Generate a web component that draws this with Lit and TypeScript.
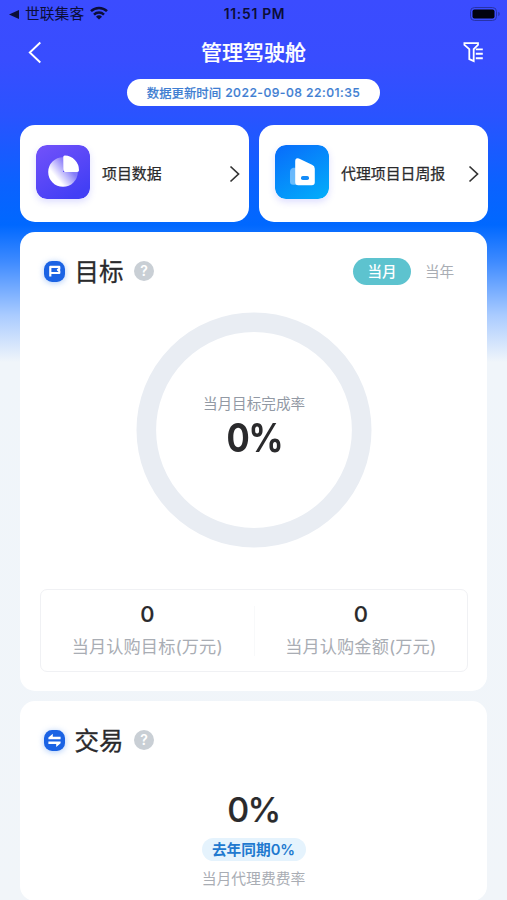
import { LitElement, html, svg, css } from "lit";
import { customElement, property, state } from "lit/decorators.js";
import { classMap } from "lit/directives/class-map.js";

const flagGlyph = svg`
  <path d="M7.6 17.2V7.2h9.4v2.2l-1.4 1 1.4 1v2.2H7.6" fill="none" stroke="#fff" stroke-width="2.3" stroke-linejoin="round"/>`;
const swapGlyph = svg`
  <path d="M10.2 4.9v3.2h8.2v2.6H5.6V8.9zM5.6 13h12.8v1.8l-4.6 4v-3.2H5.6z" fill="#fff"/>`;

@customElement("section-head")
export class SectionHead extends LitElement {
  @property() label = "";
  @property() glyph = "flag";

  static styles = css`
    :host { display: flex; align-items: center; height: 28px; font-family: "Noto Sans CJK SC", sans-serif; }
    .mark { width: 21px; height: 21px; filter: drop-shadow(0 1px 3px #2a78f066); }
    .label { font-size: 24.5px; line-height: 28px; color: #2a2a2c; margin-left: 9.5px; margin-right: .5px; -webkit-text-stroke: 0.3px #2a2a2c; }
    .help { margin-left: 10px; width: 20px; height: 20px; border-radius: 50%; background: #c9cfd5; color: #fff;
      font: 600 14px/20px Inter, sans-serif; text-align: center; }
  `;

  render() {
    return html`
      <svg class="mark" viewBox="1 1 22 22">
        <rect x="1" y="1" width="22" height="22" rx="8.5" fill="#1b63e4"/>
        ${this.glyph === "flag" ? flagGlyph : swapGlyph}
      </svg>
      <span class="label">${this.label}</span>
      <span class="help">?</span>`;
  }
}

@customElement("app-root")
export class AppRoot extends LitElement {
  @state() private period = "当月";

  private stats = [
    { value: "0", label: "当月认购目标(万元)" },
    { value: "0", label: "当月认购金额(万元)" },
  ];

  static styles = css`
    :host {
      display: block; box-sizing: border-box; height: 900px; overflow: hidden;
      font-family: Inter, "Noto Sans CJK SC", sans-serif; color: #2a2a2c;
      background: linear-gradient(180deg, #3b4cff 0, #384dff 60px, #2a53ff 115px, #0a62ff 185px, #0068ff 225px, #3f8bff 262px, #a9cbff 315px, #f0f5fa 362px, #f1f5f9 100%);
    }
    .status { display: grid; grid-template-columns: 1fr auto 1fr; align-items: center; height: 28px; padding: 0 6px 0 9px; color: #0b0e38; box-sizing: border-box; }
    .back-app { display: flex; align-items: center; font-size: 14.8px; line-height: 20px; }
    .tri { width: 10px; height: 9px; margin-right: 6px; }
    .wifi { width: 18px; height: 14px; margin-left: 6px; margin-top: -2px; }
    .clock { font-size: 13.8px; font-weight: 600; letter-spacing: 0.75px; margin-right: 1px; }
    .battery { justify-self: end; width: 31px; height: 14px; margin-top: -1px; }
    .nav { display: grid; grid-template-columns: 40px 1fr 40px; align-items: center; height: 49px; padding: 0 14px; color: #fff; }
    .nav svg { display: block; }
    .chev-left { width: 14px; height: 24px; margin-left: 14px; }
    .title { text-align: center; font-size: 21px; line-height: 28px; font-weight: 500; -webkit-text-stroke: 0.2px #fff; }
    .filter { width: 22px; height: 22px; justify-self: end; margin: -2px 9px 0 0; }
    .updated { width: 253px; height: 27px; margin: 2px auto 0; border-radius: 14px; background: #fff; color: #3f7ed2;
      display: flex; align-items: center; justify-content: center; gap: 4px; font-size: 12.4px; font-weight: 500; white-space: nowrap; -webkit-text-stroke: 0.15px; }
    .date { letter-spacing: 0.45px; font-size: 12.2px; }
    .links { display: grid; grid-template-columns: 229px 229px; gap: 10px; margin: 19px 20px 10px; }
    .link { height: 97px; box-sizing: border-box; border-radius: 15px; background: #fff; display: flex; align-items: center; padding: 0 9px 3px 16.4px; }
    .tile { width: 54px; height: 54px; border-radius: 11px; box-shadow: 0 3px 7px #5a5cff33; }
    .link-name { flex: 1; margin-left: 11.6px; padding-top: 4px; font-size: 14.9px; line-height: 20px; -webkit-text-stroke: 0.25px #2a2a2c; white-space: nowrap; }
    .chev-right { width: 11px; height: 18px; margin-top: 3px; }
    .card { margin: 0 20px 10px; background: #fff; border-radius: 15px; box-sizing: border-box; width: 467px; }
    .target { height: 459px; padding: 25px 19px 0 20px; display: flex; flex-direction: column; }
    .head { display: flex; justify-content: space-between; align-items: center; padding: 0 0 0 4px; height: 28px; }
    .toggle { display: flex; font-size: 14.6px; line-height: 28px; color: #a9adb4; }
    .opt { width: 57px; height: 27px; border-radius: 14px; text-align: center; }
    .on { width: 58px; background: #5dc3cf; color: #fff; font-weight: 500; }
    .ring { display: grid; width: 236px; height: 236px; margin: 27px auto 41px; }
    .ring > * { grid-area: 1 / 1; }
    .ring-text { display: flex; flex-direction: column; align-items: center; padding-top: 81px; }
    .caption { font-size: 14.6px; line-height: 22px; color: #9299a4; white-space: nowrap; }
    .rate { font-weight: 700; font-size: 37.5px; line-height: 44px; letter-spacing: -1.2px; margin-top: 1px; transform: scale(0.92, 1.04); }
    .stats { display: grid; grid-template-columns: 1fr 1px 1fr; height: 83px; box-sizing: border-box; border: 1px solid #f0f1f4; border-radius: 7px; align-items: center; }
    .rule { background: #f8f9fa; height: 50px; }
    .stat { display: flex; flex-direction: column; align-items: center; margin-top: -3px; }
    .num { font-size: 22px; line-height: 28px; font-weight: 500; -webkit-text-stroke: 0.2px; }
    .stat-name { font-size: 17.2px; line-height: 24px; margin-top: 7px; color: #a9adb4; letter-spacing: 0.1px; white-space: nowrap; }
    .trade { height: 200px; padding: 25px 20px 0; }
    .trade-head { padding: 0 4px; }
    .trade-body { display: flex; flex-direction: column; align-items: center; }
    .trade-rate { font-size: 34px; line-height: 40px; font-weight: 500; letter-spacing: -1.6px; margin-top: 36px; -webkit-text-stroke: 0.2px; }
    .compare { margin-top: 8px; height: 23px; width: 104px; border-radius: 12px; background: #e5f3fd; color: #2179cf;
      font-size: 14.7px; line-height: 24px; font-weight: 600; text-align: center; white-space: nowrap; }
    .pale { color: #a9adb4; margin-top: 7px; font-size: 14.8px; }
  `;

  private chevron() {
    return html`<svg class="chev-right" viewBox="0 0 11 18"><path d="M1.5 1.5 9.5 9l-8 7.5" fill="none" stroke="#333" stroke-width="1.7"/></svg>`;
  }

  render() {
    return html`
      <div class="status">
        <div class="back-app">
          <svg class="tri" viewBox="0 0 10 9"><path d="M0 4.5 10 0v9z" fill="currentColor"/></svg>
          <span>世联集客</span>
          <svg class="wifi" viewBox="0 0 18 14" fill="none" stroke="currentColor" stroke-width="2.5">
            <path d="M1 5.2a11.6 11.6 0 0 1 16 0M4 8.6a7.3 7.3 0 0 1 10 0"/>
            <path d="M9 13.6 6 10.7a4.4 4.4 0 0 1 6 0z" fill="currentColor" stroke="none"/>
          </svg>
        </div>
        <div class="clock">11:51 PM</div>
        <svg class="battery" viewBox="0 0 31 14">
          <rect x=".5" y=".5" width="26" height="13" rx="4" fill="none" stroke="#2733a8"/>
          <rect x="2.5" y="2.5" width="22" height="9" rx="2" fill="#02030f"/>
          <path d="M28.3 4.8a2.4 2.4 0 0 1 0 4.4z" fill="#2733a8"/>
        </svg>
      </div>
      <div class="nav">
        <svg class="chev-left" viewBox="0 0 14 24"><path d="M12.3 1.5 1.8 11.5l10.5 10" fill="none" stroke="#fff" stroke-width="1.9"/></svg>
        <div class="title">管理驾驶舱</div>
        <svg class="filter" viewBox="0 0 22 22" fill="none" stroke="#fff" stroke-width="1.8">
          <path d="M2.4 2.2h13.6v1.6l-4.3 4.4v11.9l-4.4-2V8.2L2.4 3.8z"/>
          <path d="M13.8 8.4h7M13.8 12.8h7M13.8 17.2h7" stroke-width="1.9"/>
        </svg>
      </div>
      <div class="updated"><span>数据更新时间</span><span class="date">2022-09-08 22:01:35</span></div>

      <div class="links">
        <div class="link">
          <svg class="tile" viewBox="0 0 54 54">
            <defs>
              <linearGradient id="violet" x1="0" y1="0" x2=".6" y2="1"><stop stop-color="#7352fa"/><stop offset="1" stop-color="#433ff5"/></linearGradient>
              <linearGradient id="pie" x1=".1" y1=".85" x2=".7" y2=".35"><stop offset=".3" stop-color="#fff"/><stop offset="1" stop-color="#fff" stop-opacity=".3"/></linearGradient>
            </defs>
            <rect width="54" height="54" rx="11" fill="url(#violet)"/>
            <path d="M27 12.2v14.8h14.8A14.8 14.8 0 1 1 27 12.2z" fill="url(#pie)"/>
            <path d="M27.2 12.2q0-1.7 1.7-1.6A14.6 14.6 0 0 1 43 25.2q0 1.8-1.7 1.8H30q-2.8 0-2.8-2.8z" fill="#fff"/>
          </svg>
          <span class="link-name">项目数据</span>${this.chevron()}
        </div>
        <div class="link">
          <svg class="tile" viewBox="0 0 54 54">
            <defs><linearGradient id="azure" x1=".2" y1="0" x2=".8" y2="1"><stop stop-color="#0870fb"/><stop offset="1" stop-color="#03aafa"/></linearGradient></defs>
            <rect width="54" height="54" rx="11" fill="url(#azure)"/>
            <path d="M18 22.7q-3 1-3 4v10q0 3 3 3h5V22.7z" fill="#fff" opacity=".4"/>
            <path d="M20.2 16.2q0-3.9 3.7-2.8L37 19.7q2.8 1.2 2.8 4v13.5q0 3-3 3H23.2q-3 0-3-3z" fill="#fff"/>
            <rect x="26" y="31" width="8" height="4" rx="1.8" fill="#138bf8"/>
          </svg>
          <span class="link-name">代理项目日周报</span>${this.chevron()}
        </div>
      </div>

      <div class="card target">
        <div class="head">
          <section-head label="目标" glyph="flag"></section-head>
          <div class="toggle">
            ${["当月", "当年"].map(
              (p) => html`<span class=${classMap({ opt: true, on: p === this.period })} @click=${() => (this.period = p)}>${p}</span>`
            )}
          </div>
        </div>
        <div class="ring">
          <svg viewBox="0 0 236 236"><circle cx="118" cy="118" r="107.7" fill="none" stroke="#e9edf3" stroke-width="19.6"/></svg>
          <div class="ring-text">
            <span class="caption">当月目标完成率</span>
            <span class="rate">0%</span>
          </div>
        </div>
        <div class="stats">
          ${this.stats.map(
            (s, i) => html`${i ? html`<div class="rule"></div>` : ""}
              <div class="stat"><span class="num">${s.value}</span><span class="stat-name">${s.label}</span></div>`
          )}
        </div>
      </div>

      <div class="card trade">
        <div class="trade-head"><section-head label="交易" glyph="swap"></section-head></div>
        <div class="trade-body">
          <span class="trade-rate">0%</span>
          <span class="compare">去年同期0%</span>
          <span class="caption pale">当月代理费费率</span>
        </div>
      </div>
    `;
  }
}
